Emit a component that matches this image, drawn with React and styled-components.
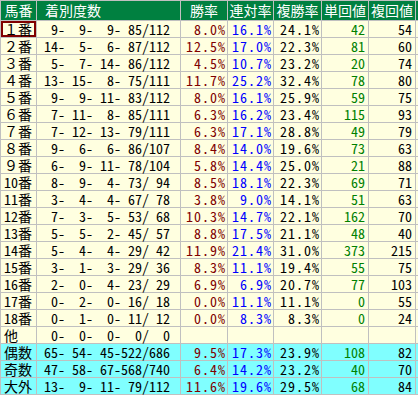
import React from "react";
import styled, { createGlobalStyle } from "styled-components";

const GlobalStyle = createGlobalStyle`
  html, body {
    margin: 0;
    padding: 0;
    background: #ffffff;
  }
  body {
    font-family: "Noto Sans Mono CJK JP", "Noto Sans CJK JP", "DejaVu Sans Mono", monospace;
  }
`

const Frame = styled.div`
    width: 418px;
    height: 395px;
    overflow: hidden;
`

const Table = styled.table`
    border-collapse: separate;
    border-spacing: 1px;
    background-color: #c0c0c0;
    table-layout: fixed;
    width: 463px;
`

const HeadCell = styled.th`
    height: 19px;
    padding: 0 0 0 ${props => props.$left ? '8px' : '0'};
    background-color: #008040;
    color: #ffffff;
    font-weight: normal;
    font-size: 14px;
    line-height: 19px;
    text-align: ${props => props.$left ? 'left' : 'center'};
    white-space: nowrap;
`

const Cell = styled.td`
    height: 16px;
    padding: 0;
    font-size: 14px;
    line-height: 16px;
    white-space: pre;
    color: #000000;
    background-color: ${props => props.$band ? '#80ffff' : '#ffffe0'};
`

const Label = styled(Cell)`
    padding-left: 3px;
    box-shadow: ${props => props.$picked ? 'inset 0 0 0 2px #800000' : 'none'};
`

const Record = styled(Cell)`
    padding-left: 7px;
`

const Rate = styled(Cell)`
    text-align: right;
    padding-right: 1px;
    letter-spacing: 1px;
    color: ${props => props.$tone};
`

const Amount = styled(Cell)`
    text-align: right;
    padding-right: 3px;
    color: ${props => props.$tone};
`

const heads = ['勝率', '連対率', '複勝率', '単回値', '複回値']

const rows = [
    ['１番', [9, 9, 9, 85, 112], [8.0, 16.1, 24.1, 42, 54]],
    ['２番', [14, 5, 6, 87, 112], [12.5, 17.0, 22.3, 81, 60]],
    ['３番', [5, 7, 14, 86, 112], [4.5, 10.7, 23.2, 20, 74]],
    ['４番', [13, 15, 8, 75, 111], [11.7, 25.2, 32.4, 78, 80]],
    ['５番', [9, 9, 11, 83, 112], [8.0, 16.1, 25.9, 59, 75]],
    ['６番', [7, 11, 8, 85, 111], [6.3, 16.2, 23.4, 115, 93]],
    ['７番', [7, 12, 13, 79, 111], [6.3, 17.1, 28.8, 49, 79]],
    ['８番', [9, 6, 6, 86, 107], [8.4, 14.0, 19.6, 73, 63]],
    ['９番', [6, 9, 11, 78, 104], [5.8, 14.4, 25.0, 21, 88]],
    ['10番', [8, 9, 4, 73, 94], [8.5, 18.1, 22.3, 69, 71]],
    ['11番', [3, 4, 4, 67, 78], [3.8, 9.0, 14.1, 51, 63]],
    ['12番', [7, 3, 5, 53, 68], [10.3, 14.7, 22.1, 162, 70]],
    ['13番', [5, 5, 2, 45, 57], [8.8, 17.5, 21.1, 48, 40]],
    ['14番', [5, 4, 4, 29, 42], [11.9, 21.4, 31.0, 373, 215]],
    ['15番', [3, 1, 3, 29, 36], [8.3, 11.1, 19.4, 55, 75]],
    ['16番', [2, 0, 4, 23, 29], [6.9, 6.9, 20.7, 77, 103]],
    ['17番', [0, 2, 0, 16, 18], [0.0, 11.1, 11.1, 0, 55]],
    ['18番', [0, 1, 0, 11, 12], [0.0, 8.3, 8.3, 0, 24]],
    ['他', [0, 0, 0, 0, 0], null],
    ['偶数', [65, 54, 45, 522, 686], [9.5, 17.3, 23.9, 108, 82], true],
    ['奇数', [47, 58, 67, 568, 740], [6.4, 14.2, 23.2, 40, 70], true],
    ['大外', [13, 9, 11, 79, 112], [11.6, 19.6, 29.5, 68, 84], true],
]

const pad = (n, w) => String(n).padStart(w, ' ')

const record = (r) => `${pad(r[0], 2)}-${pad(r[1], 3)}-${pad(r[2], 3)}-${pad(r[3], 3)}/${pad(r[4], 3)}`

const rateTones = ['#800000', '#0000ff', '#000000']

export default function App() {
    return <Frame>
        <GlobalStyle />
        <Table>
            <colgroup>
                <col style={{ width: 35 }} />
                <col style={{ width: 143 }} />
                <col style={{ width: 46 }} />
                <col style={{ width: 45 }} />
                <col style={{ width: 47 }} />
                <col style={{ width: 46 }} />
                <col style={{ width: 46 }} />
                <col style={{ width: 46 }} />
            </colgroup>
            <thead>
                <tr>
                    <HeadCell>馬番</HeadCell>
                    <HeadCell $left>着別度数</HeadCell>
                    {heads.map(h => <HeadCell key={h}>{h}</HeadCell>)}
                    <HeadCell></HeadCell>
                </tr>
            </thead>
            <tbody>
                {rows.map(([name, rec, stats, band], i) => (
                    <tr key={name}>
                        <Label $band={band} $picked={i === 0}>{name}</Label>
                        <Record $band={band}>{record(rec)}</Record>
                        {stats ? <>
                            {stats.slice(0, 3).map((v, k) => (
                                <Rate key={k} $band={band} $tone={rateTones[k]}>{v.toFixed(1) + '%'}</Rate>
                            ))}
                            <Amount $band={band} $tone="#008000">{stats[3]}</Amount>
                            <Amount $band={band} $tone="#000000">{stats[4]}</Amount>
                        </> : <>
                            <Rate $band={band} />
                            <Rate $band={band} />
                            <Rate $band={band} />
                            <Amount $band={band} />
                            <Amount $band={band} />
                        </>}
                        <Cell $band={band} />
                    </tr>
                ))}
            </tbody>
        </Table>
    </Frame>
}
